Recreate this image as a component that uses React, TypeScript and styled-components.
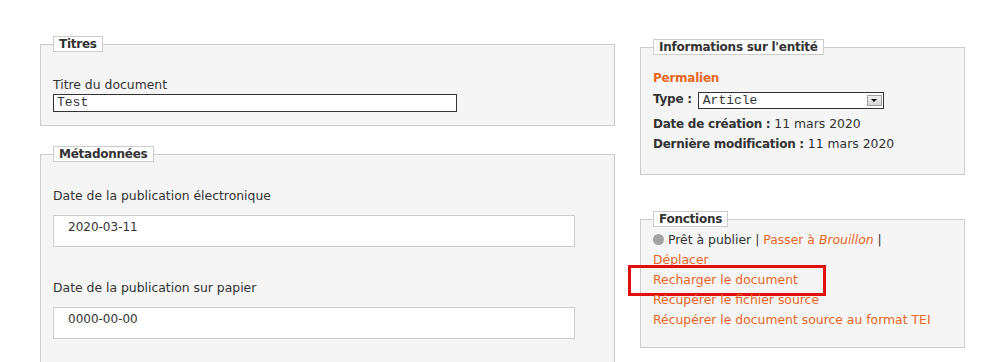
import React from 'react';
import styled, { createGlobalStyle } from 'styled-components';

const Global = createGlobalStyle`
  body {
    margin: 0;
    background: #fff;
    color: #333;
    font-family: "DejaVu Sans", Verdana, sans-serif;
    font-size: 12.4px;
  }
`;

const Orange = '#e8661e';

const Page = styled.div`
  display: flex;
  align-items: flex-start;
  gap: 25px;
  padding-left: 40px;
`;

const Column = styled.div<{ $top: number; $width: number; $gap: number }>`
  display: flex;
  flex-direction: column;
  width: ${(p) => p.$width}px;
  padding-top: ${(p) => p.$top}px;
  gap: ${(p) => p.$gap}px;
`;

const Box = styled.fieldset<{ $bottom: number }>`
  margin: 0;
  min-width: 0;
  border: 1px solid #ccc;
  background: #f5f5f5;
  padding: 0 12px ${(p) => p.$bottom}px;
`;

const Legend = styled.legend`
  padding: 0 5px;
  border: 1px solid #ccc;
  background: #fff;
  font-weight: bold;
  font-size: 12px;
  letter-spacing: -0.25px;
  line-height: 14px;
  color: #333;
`;

const Label = styled.div<{ $top: number }>`
  margin-top: ${(p) => p.$top}px;
  line-height: 16px;
`;

const TextInput = styled.div`
  box-sizing: border-box;
  margin-top: 1px;
  width: 404px;
  height: 18px;
  border: 1px solid #333;
  background: #fff;
  padding: 0 3px;
  font-family: "Liberation Mono", monospace;
  font-size: 13px;
  line-height: 16px;
`;

const DateInput = styled.div`
  box-sizing: border-box;
  margin-top: 11px;
  width: 522px;
  height: 32px;
  border: 1px solid #ccc;
  background: #fff;
  padding: 3px 14px;
  line-height: 16px;
  font-size: 12px;
`;

const Line = styled.div<{ $top?: number }>`
  position: relative;
  margin-top: ${(p) => p.$top ?? 0}px;
  line-height: 20px;
  white-space: nowrap;
`;

const Permalink = styled.a`
  color: ${Orange};
  font-weight: bold;
  font-size: 12px;
  letter-spacing: -0.25px;
  text-decoration: none;
`;

const Link = styled.a`
  color: ${Orange};
  text-decoration: none;
`;

const Bold = styled.b`
  font-weight: bold;
  font-size: 12px;
  letter-spacing: -0.25px;
`;

const TypeRow = styled.div`
  display: flex;
  align-items: center;
  gap: 6px;
  height: 20px;
  margin-top: 1px;
`;

const Select = styled.div`
  box-sizing: border-box;
  display: flex;
  align-items: center;
  width: 186px;
  height: 17px;
  margin-top: 2px;
  border: 1px solid #333;
  background: #fff;
  padding-left: 4px;
  font-family: "Liberation Mono", monospace;
  font-size: 13px;
`;

const SelectText = styled.span`
  flex: 1;
`;

const Arrow = styled.span`
  box-sizing: border-box;
  display: flex;
  align-items: center;
  justify-content: center;
  width: 15px;
  height: 11px;
  margin-right: 1px;
  background: linear-gradient(#f0f0f0, #d4d4d4);
  border: 1px solid #a0a0a0;
  &::after {
    content: '';
    border-left: 3px solid transparent;
    border-right: 3px solid transparent;
    border-top: 3px solid #111;
  }
`;

const Dot = styled.span`
  display: inline-block;
  width: 11px;
  height: 11px;
  border-radius: 50%;
  background: #a3a3a3;
  margin-right: 4px;
  vertical-align: -1px;
`;

const Highlight = styled.div`
  position: absolute;
  box-sizing: border-box;
  left: -25px;
  top: -5px;
  width: 198px;
  height: 31px;
  border: 3px solid #e01010;
  pointer-events: none;
`;

export default function App() {
  return (
    <>
      <Global />
      <Page>
        <Column $top={36} $width={575} $gap={20}>
          <Box $bottom={13}>
            <Legend>Titres</Legend>
            <Label $top={25}>Titre du document</Label>
            <TextInput>Test</TextInput>
          </Box>
          <Box $bottom={30}>
            <Legend>Métadonnées</Legend>
            <Label $top={26}>Date de la publication électronique</Label>
            <DateInput>2020-03-11</DateInput>
            <Label $top={33}>Date de la publication sur papier</Label>
            <DateInput>0000-00-00</DateInput>
          </Box>
        </Column>
        <Column $top={39} $width={325} $gap={36}>
          <Box $bottom={20}>
            <Legend>Informations sur l'entité</Legend>
            <Line $top={13}>
              <Permalink href="#">Permalien</Permalink>
            </Line>
            <TypeRow>
              <Bold>Type :</Bold>
              <Select>
                <SelectText>Article</SelectText>
                <Arrow />
              </Select>
            </TypeRow>
            <Line $top={5}>
              <Bold>Date de création :</Bold> 11 mars 2020
            </Line>
            <Line>
              <Bold>Dernière modification :</Bold> 11 mars 2020
            </Line>
          </Box>
          <Box $bottom={17}>
            <Legend>Fonctions</Legend>
            <Line $top={3}>
              <Dot />
              Prêt à publier | <Link href="#">Passer à <i>Brouillon</i></Link> |
            </Line>
            <Line>
              <Link href="#">Déplacer</Link>
            </Line>
            <Line>
              <Link href="#">Recharger le document</Link>
              <Highlight />
            </Line>
            <Line>
              <Link href="#">Récupérer le fichier source</Link>
            </Line>
            <Line>
              <Link href="#">Récupérer le document source au format TEI</Link>
            </Line>
          </Box>
        </Column>
      </Page>
    </>
  );
}
